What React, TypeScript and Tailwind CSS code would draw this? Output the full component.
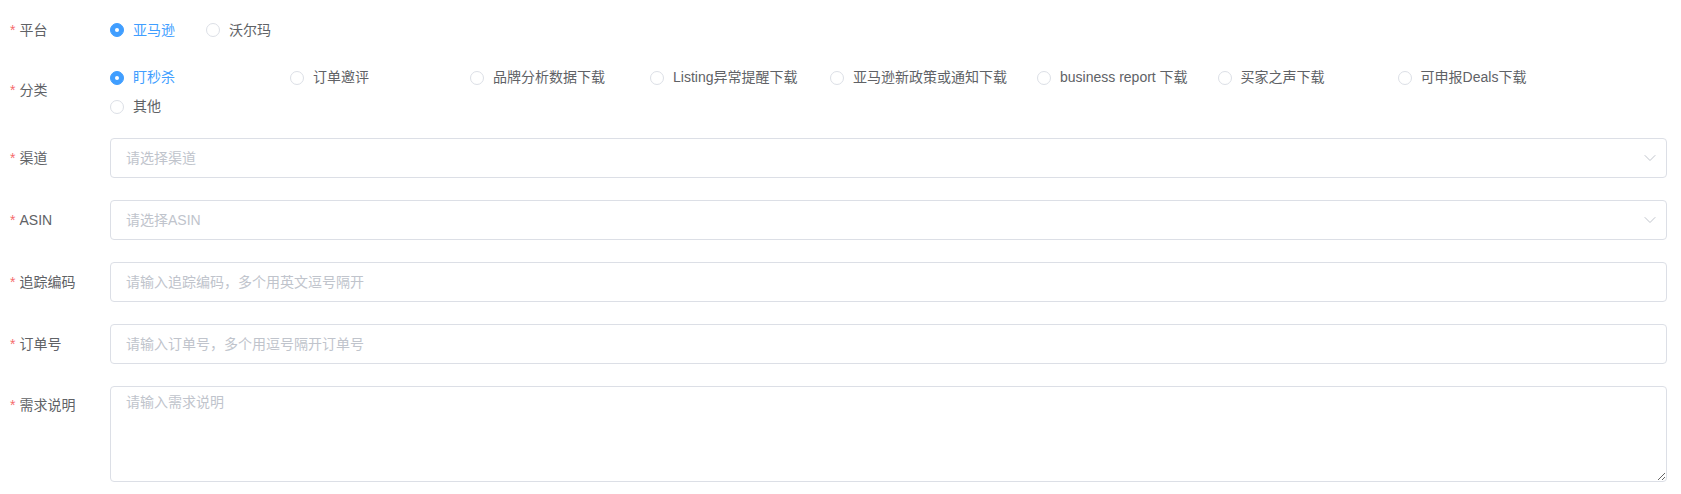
import { ChevronDown } from 'lucide-react'

const platforms = ['亚马逊', '沃尔玛']
const categories = [
  '盯秒杀',
  '订单邀评',
  '品牌分析数据下载',
  'Listing异常提醒下载',
  '亚马逊新政策或通知下载',
  'business report 下载',
  '买家之声下载',
  '可申报Deals下载',
  '其他',
]

function Radio({ label, checked }: { label: string; checked?: boolean }) {
  return (
    <label className="flex items-center cursor-pointer">
      {checked ? (
        <span className="w-[14px] h-[14px] rounded-full bg-[#409eff] border border-[#409eff] flex items-center justify-center">
          <span className="w-[4px] h-[4px] rounded-full bg-white" />
        </span>
      ) : (
        <span className="w-[14px] h-[14px] rounded-full bg-white border border-[#dcdfe6]" />
      )}
      <span className={`pl-[9px] text-[14px] whitespace-nowrap ${checked ? 'text-[#409eff]' : 'text-[#606266]'}`}>
        {label}
      </span>
    </label>
  )
}

function Label({ text }: { text: string }) {
  return (
    <div className="w-[100px] shrink-0 h-[40px] leading-[40px] text-[14px] text-[#606266]">
      <span className="text-[#f56c6c] mr-[4px]">*</span>
      {text}
    </div>
  )
}

function TextInput({ placeholder, select }: { placeholder: string; select?: boolean }) {
  return (
    <div className="relative flex-1">
      <input
        readOnly={select}
        placeholder={placeholder}
        className="w-full h-[40px] border border-[#dcdfe6] rounded-[4px] px-[15px] text-[14px] text-[#606266] placeholder:text-[#c0c4cc] outline-none bg-white"
      />
      {select && (
        <span className="absolute right-[5px] top-0 h-[40px] w-[25px] flex items-center justify-center text-[#c0c4cc]">
          <ChevronDown size={20} strokeWidth={1.2} />
        </span>
      )}
    </div>
  )
}

export default function App() {
  return (
    <div
      className="w-[1681px] h-[494px] bg-white pl-[10px] pr-[14px] pt-[10px]"
      style={{ fontFamily: '"Liberation Sans", Helvetica, "Noto Sans CJK SC", sans-serif' }}
    >
      {/* 平台 */}
      <div className="flex items-center h-[40px]">
        <Label text="平台" />
        <div className="flex items-center gap-[31px]">
          {platforms.map((p, i) => (
            <Radio key={p} label={p} checked={i === 0} />
          ))}
        </div>
      </div>

      {/* 分类 */}
      <div className="flex items-start mt-[13px]">
        <div className="mt-[7px]">
          <Label text="分类" />
        </div>
        <div className="flex flex-wrap flex-1">
          {categories.map((c, i) => (
            <div key={c} className="h-[29px] flex items-center min-w-[150px] mr-[30px]">
              <Radio label={c} checked={i === 0} />
            </div>
          ))}
        </div>
      </div>

      <div className="flex items-center mt-[17px]">
        <Label text="渠道" />
        <TextInput placeholder="请选择渠道" select />
      </div>

      <div className="flex items-center mt-[22px]">
        <Label text="ASIN" />
        <TextInput placeholder="请选择ASIN" select />
      </div>

      <div className="flex items-center mt-[22px]">
        <Label text="追踪编码" />
        <TextInput placeholder="请输入追踪编码，多个用英文逗号隔开" />
      </div>

      <div className="flex items-center mt-[22px]">
        <Label text="订单号" />
        <TextInput placeholder="请输入订单号，多个用逗号隔开订单号" />
      </div>

      <div className="flex items-start mt-[22px]">
        <div className="-mt-[1px]">
          <Label text="需求说明" />
        </div>
        <textarea
          rows={4}
          placeholder="请输入需求说明"
          className="flex-1 h-[96px] border border-[#dcdfe6] rounded-[4px] px-[15px] py-[5px] text-[14px] leading-[21px] text-[#606266] placeholder:text-[#c0c4cc] outline-none resize-y bg-white"
        />
      </div>
    </div>
  )
}
